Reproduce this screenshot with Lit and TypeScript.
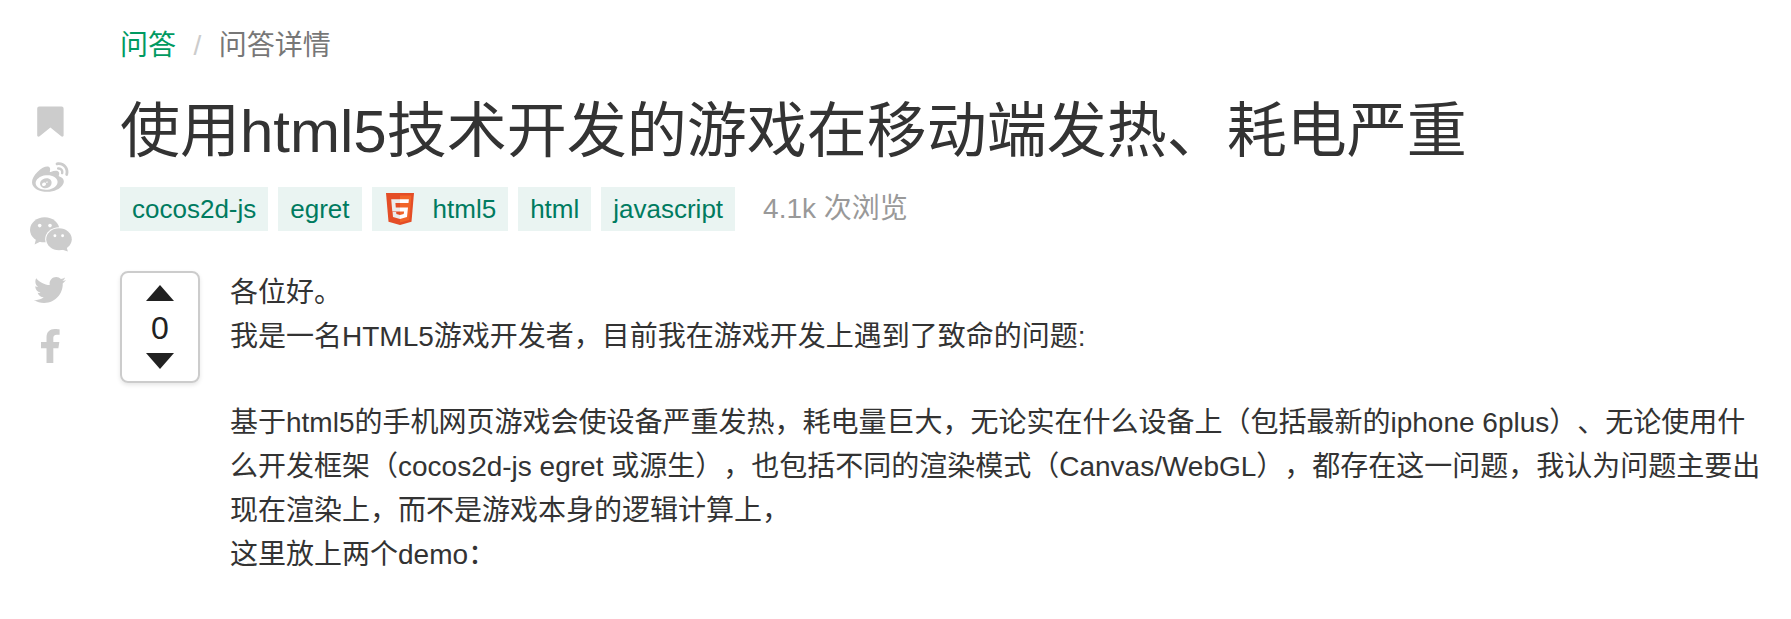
import { LitElement, html, css, nothing } from "lit";
import { customElement, property, state } from "lit/decorators.js";

const bookmark = html`<svg class="bookmark" width="27" height="31" viewBox="0 0 27 31">
  <path d="M2.2 0.4h22.4a2 2 0 0 1 2 2v26.9c0 1.5-1.5 1.8-2.4 1L13.4 21.6 2.6 30.3c-.9.8-2.4.5-2.4-1V2.4a2 2 0 0 1 2-2z"/>
</svg>`;

const weibo = html`<svg width="36.5" height="36.5" viewBox="0 0 512 512">
  <path d="M407 177.6c7.6-24-13.4-46.8-37.4-41.7-22 4.8-28.8-28.1-7.1-32.8 50.1-10.9 92.3 37.1 76.5 84.8-6.8 21.2-38.8 10.8-32-10.3zM214.8 446.7C108.5 446.7 0 395.3 0 310.4c0-44.3 28-95.4 76.3-143.7C176 67 279.5 65.8 249.9 161c-4 13.1 12.3 5.7 12.3 6 79.5-33.6 140.5-16.8 114 51.4-3.7 9.4 1.1 10.9 8.3 13.1 135.7 42.3 34.8 215.2-169.7 215.2zm143.7-146.3c-5.4-55.7-78.5-94-163.4-85.7-84.8 8.6-148.8 60.3-143.4 116s78.5 94 163.4 85.7c84.8-8.6 148.8-60.3 143.4-116zM347.9 35.1c-25.9 5.6-16.8 43.7 8.3 38.3 72.3-15.2 134.8 52.8 111.7 124-7.4 24.2 29.1 37 37.4 12 31.9-99.8-55.1-195.9-157.4-174.3zm-78.5 311c-17.1 38.8-66.8 60-109.1 46.3-40.8-13.1-58-53.4-40.3-89.7 17.7-35.4 63.1-55.4 103.4-45.1 42 10.8 63.1 50.2 46 88.5zm-86.3-30c-12.9-5.4-30 .3-38 12.9-8.3 12.9-4.3 28 8.6 34 13.1 6 30.8.3 39.1-12.9 8-13.1 3.7-28.3-9.7-34zm32.6-13.4c-5.1-1.7-11.4.6-14.3 5.4-2.9 5.1-1.4 10.6 3.7 12.9 5.1 2 11.7-.3 14.6-5.4 2.8-5.2 1.1-10.9-4-12.9z"/>
</svg>`;

const wechat = html`<svg class="wechat" width="42" height="35" viewBox="0 0 42 35">
  <ellipse cx="14.7" cy="12.8" rx="14.7" ry="12.5"/>
  <path d="M6.2 21.5L4.6 27.4 11.5 24z"/>
  <ellipse cx="29" cy="22.3" rx="13.8" ry="12" fill="#fff"/>
  <ellipse cx="29" cy="22.3" rx="12.8" ry="11"/>
  <path d="M31 32.2l6.8 2.4-1.3-5.2z"/>
  <g fill="#fff">
    <circle cx="9.7" cy="8.6" r="1.8"/><circle cx="20" cy="8.6" r="1.8"/>
    <circle cx="24.9" cy="18.7" r="1.45"/><circle cx="32.6" cy="18.7" r="1.45"/>
  </g>
</svg>`;

const twitter = html`<svg width="32" height="32" viewBox="0 0 512 512">
  <path d="M459.37 151.716c.325 4.548.325 9.097.325 13.645 0 138.72-105.583 298.558-298.558 298.558-59.452 0-114.68-17.219-161.137-47.106 8.447.974 16.568 1.299 25.34 1.299 49.055 0 94.213-16.568 130.274-44.832-46.132-.975-84.792-31.188-98.112-72.772 6.498.974 12.995 1.624 19.818 1.624 9.421 0 18.843-1.3 27.614-3.573-48.081-9.747-84.143-51.98-84.143-102.985v-1.299c13.969 7.797 30.214 12.67 47.431 13.319-28.264-18.843-46.781-51.005-46.781-87.391 0-19.492 5.197-37.36 14.294-52.954 51.655 63.675 129.3 105.258 216.365 109.807-1.624-7.797-2.599-15.918-2.599-24.04 0-57.828 46.782-104.934 104.934-104.934 30.213 0 57.502 12.67 76.67 33.137 23.715-4.548 46.456-13.32 66.599-25.34-7.798 24.366-24.366 44.833-46.132 57.827 21.117-2.273 41.584-8.122 60.426-16.243-14.292 20.791-32.161 39.308-52.628 54.253z"/>
</svg>`;

const facebook = html`<svg width="18.6" height="34" viewBox="22.9 0 274.2 512" preserveAspectRatio="none">
  <path d="M279.14 288l14.22-92.66h-88.91v-60.13c0-25.35 12.42-50.06 52.24-50.06h40.42V6.26S260.43 0 225.36 0c-73.22 0-121.08 44.38-121.08 124.72v70.62H22.89V288h81.39v224h100.17V288z"/>
</svg>`;

const html5Logo = html`<svg width="32" height="32" viewBox="0 0 32 32">
  <path fill="#e44d26" d="M2 0h28l-2.5 28.7L16 32 4.5 28.7z"/>
  <path fill="#f16529" d="M16 2.5v27l9.3-2.6L27.4 2.5z"/>
  <path fill="#ebebeb" d="M16 6.2H7.2l1.1 12.2H16v-3.9h-4.2l-.4-4.4H16zM16 22.1l-3.6-1-.3-2.2H8.6l.4 5 7 2z"/>
  <path fill="#fff" d="M16 6.2v3.9h8.5l.4-3.9zM16 14.5v3.9h4.1l-.4 2.7-3.7 1v3.9l7-2 1-9.5z"/>
</svg>`;

@customElement("share-rail")
class ShareRail extends LitElement {
  static styles = css`
    :host { display: flex; flex-direction: column; width: 42px; }
    .item {
      height: 56px; display: flex; align-items: center; justify-content: center;
      fill: #ccc;
    }
    svg { display: block; overflow: visible; flex: none; }
    .bookmark { margin-bottom: 1px; }
    .wechat { margin-right: -2px; }
  `;
  render() {
    return [bookmark, weibo, wechat, twitter, facebook].map(
      (icon) => html`<div class="item">${icon}</div>`
    );
  }
}

@customElement("topic-tag")
class TopicTag extends LitElement {
  @property() label = "";
  @property({ type: Boolean }) logo = false;
  static styles = css`
    :host {
      display: flex; align-items: center; height: 44px; padding: 0 12px;
      background: #eaf4f2; color: #007b60; font-size: 26px; line-height: 44px;
      white-space: nowrap;
    }
    .logo { display: flex; margin-right: 17px; }
  `;
  render() {
    return html`${this.logo ? html`<span class="logo">${html5Logo}</span>` : nothing}<span>${this.label}</span>`;
  }
}

@customElement("vote-box")
class VoteBox extends LitElement {
  @state() private count = 0;
  static styles = css`
    :host {
      box-sizing: border-box; width: 80px; height: 112px; flex: none;
      display: flex; flex-direction: column; align-items: center; justify-content: space-between;
      padding: 12px 0; border: 2px solid #ccc; border-radius: 8px;
      box-shadow: 0 2px 4px rgba(0, 0, 0, 0.1); color: #212121;
    }
    .arrow { display: block; fill: #212121; }
    .count { font-size: 32px; line-height: 36px; padding-top: 2px; }
  `;
  render() {
    return html`
      <svg class="arrow" width="28" height="16" viewBox="0 0 28 16"><path d="M14 0l14 16H0z"/></svg>
      <span class="count">${this.count}</span>
      <svg class="arrow" width="28" height="16" viewBox="0 0 28 16"><path d="M0 0h28L14 16z"/></svg>
    `;
  }
}

@customElement("app-root")
class AppRoot extends LitElement {
  private tags = [
    { label: "cocos2d-js" },
    { label: "egret" },
    { label: "html5", logo: true },
    { label: "html" },
    { label: "javascript" },
  ];

  static styles = css`
    :host {
      display: flex; box-sizing: border-box; height: 619px; overflow: hidden;
      padding-left: 29px; background: #fff; color: #333;
      font-family: "Liberation Sans", "Noto Sans CJK SC", sans-serif;
      font-size: 28px; text-spacing-trim: space-all;
    }
    .rail { padding-top: 94px; }
    .main { margin-left: 49px; padding-top: 24px; }
    .crumbs { display: flex; gap: 17.5px; line-height: 44px; color: #777; }
    .crumbs .link { color: #009a61; }
    .crumbs .sep { color: #ccc; }
    .title {
      margin: 28px 0 0; font-size: 60px; line-height: 72px; font-weight: 400;
      white-space: nowrap;
    }
    .meta { display: flex; gap: 10px; margin-top: 19px; }
    .views { margin-left: 18px; line-height: 44px; color: #999; }
    .question { display: flex; gap: 30px; margin-top: 40px; }
    .body { line-height: 44px; white-space: nowrap; }
    .body p { margin: 0 0 42px; }
  `;

  render() {
    return html`
      <div class="rail"><share-rail></share-rail></div>
      <div class="main">
        <nav class="crumbs">
          <span class="link">问答</span><span class="sep">/</span><span>问答详情</span>
        </nav>
        <h1 class="title">使用html5技术开发的游戏在移动端发热、耗电严重</h1>
        <div class="meta">
          ${this.tags.map((t) => html`<topic-tag .label=${t.label} .logo=${!!t.logo}></topic-tag>`)}
          <span class="views">4.1k 次浏览</span>
        </div>
        <div class="question">
          <vote-box></vote-box>
          <div class="body">
            <p>各位好。<br>我是一名HTML5游戏开发者，目前我在游戏开发上遇到了致命的问题:</p>
            <p>基于html5的手机网页游戏会使设备严重发热，耗电量巨大，无论实在什么设备上（包括最新的iphone 6plus）、无论使用什<br>么开发框架（cocos2d-js egret 或源生），也包括不同的渲染模式（Canvas/WebGL），都存在这一问题，我认为问题主要出<br>现在渲染上，而不是游戏本身的逻辑计算上，<br>这里放上两个demo：</p>
          </div>
        </div>
      </div>
    `;
  }
}
